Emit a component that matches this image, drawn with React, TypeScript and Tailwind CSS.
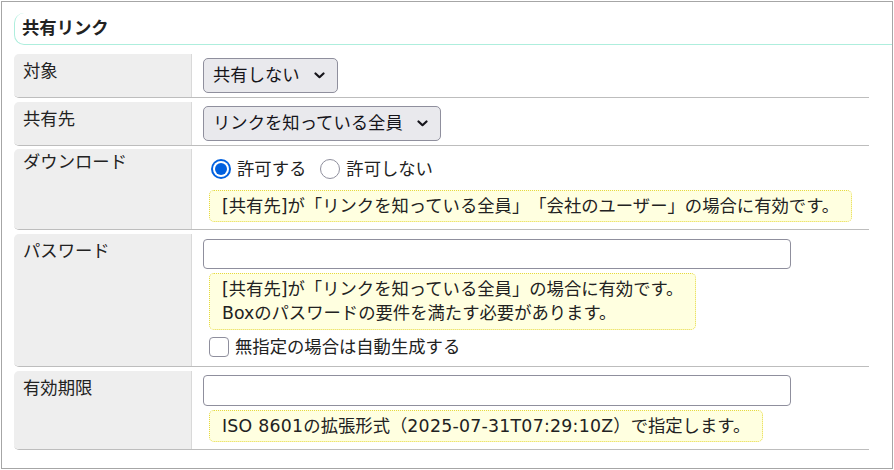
import React from 'react';

const FONT = { fontFamily: '"DejaVu Sans", "Noto Sans CJK JP", sans-serif' };

function Chevron() {
  return (
    <svg width="11" height="7" viewBox="0 0 11 7" className="ml-[14px] shrink-0">
      <polyline points="1.5,1.5 5.5,5.2 9.5,1.5" fill="none" stroke="#15141a" strokeWidth="2.2" strokeLinecap="round" strokeLinejoin="round" />
    </svg>
  );
}

function Select({ value }: { value: string }) {
  return (
    <div className="inline-flex items-center h-[35px] pl-[9px] pr-[12px] bg-[#e9e9ed] border border-[#8f8f9d] rounded-[5px] text-[#15141a]">
      <span>{value}</span>
      <Chevron />
    </div>
  );
}

function Note({ children }: { children: React.ReactNode }) {
  return (
    <div className="ml-[6px] px-3 py-[3px] bg-[#ffffe0] border border-dotted border-[#e5d940] rounded-[5px]">
      {children}
    </div>
  );
}

function Row({ label, labelPad, children, valuePad }: { label: string; labelPad: string; children: React.ReactNode; valuePad: string }) {
  return (
    <div className="flex border-b border-[#bdbdbd] rounded-l-[5px] overflow-hidden">
      <div className={`w-[178px] shrink-0 bg-[#eeeeee] border-r border-[#d9d9d9] pl-[9px] ${labelPad}`}>{label}</div>
      <div className={`flex-1 flex flex-col pl-[11px] ${valuePad}`}>{children}</div>
    </div>
  );
}

export default function App() {
  return (
    <div style={FONT} className="ml-px mt-px w-[892px] h-[468px] border border-[#a6a6a6] bg-white text-[17.33px] leading-[24.5px] text-[#222] [text-spacing-trim:space-all]">
      <div className="pl-3 pt-[11px]">
        {/* Header */}
        <div className="h-[32px] flex items-center pl-[7px] border-l border-b border-[#aeeedd] rounded-l-[10px] font-bold">
          共有リンク
        </div>

        {/* Rows */}
        <div className="mt-[9px] mr-[23px] flex flex-col gap-[3.5px]">
          <Row label="対象" labelPad="pt-[5px]" valuePad="py-1">
            <div className="flex"><Select value="共有しない" /></div>
          </Row>

          <Row label="共有先" labelPad="pt-[5px]" valuePad="py-1">
            <div className="flex"><Select value="リンクを知っている全員" /></div>
          </Row>

          <Row label="ダウンロード" labelPad="pt-[1px]" valuePad="pt-2 pb-[7px]">
            <div className="flex items-center h-[24.5px]">
              <span className="ml-2 w-5 h-5 rounded-full bg-[#0060df] p-[2px]">
                <span className="block w-full h-full rounded-full bg-white p-[2px]">
                  <span className="block w-full h-full rounded-full bg-[#0060df]" />
                </span>
              </span>
              <span className="ml-[6px]">許可する</span>
              <span className="ml-[14px] w-5 h-5 rounded-full border border-[#8f8f9d] bg-white" />
              <span className="ml-[6px]">許可しない</span>
            </div>
            <div className="mt-2 flex">
              <Note>[共有先]が「リンクを知っている全員」「会社のユーザー」の場合に有効です。</Note>
            </div>
          </Row>

          <Row label="パスワード" labelPad="pt-[5px]" valuePad="pt-[5px] pb-[7px]">
            <div className="w-[588px] h-[30px] border border-[#8f8f9d] rounded-[4px] bg-white" />
            <div className="mt-1 flex">
              <Note>
                [共有先]が「リンクを知っている全員」の場合に有効です。
                <br />
                Boxのパスワードの要件を満たす必要があります。
              </Note>
            </div>
            <div className="mt-[5px] flex items-center h-[24.5px]">
              <span className="ml-[6px] w-5 h-5 rounded-[4px] border border-[#8f8f9d] bg-white" />
              <span className="ml-[6px]">無指定の場合は自動生成する</span>
            </div>
          </Row>

          <Row label="有効期限" labelPad="pt-[5px]" valuePad="pt-1 pb-[7px]">
            <div className="w-[588px] h-[31px] border border-[#8f8f9d] rounded-[4px] bg-white" />
            <div className="mt-1 flex">
              <Note>
                <span className="tracking-[0.25px]">ISO 8601</span>の拡張形式（<span className="tracking-[0.25px]">2025-07-31T07:29:10Z</span>）で指定します。
              </Note>
            </div>
          </Row>
        </div>
      </div>
    </div>
  );
}
